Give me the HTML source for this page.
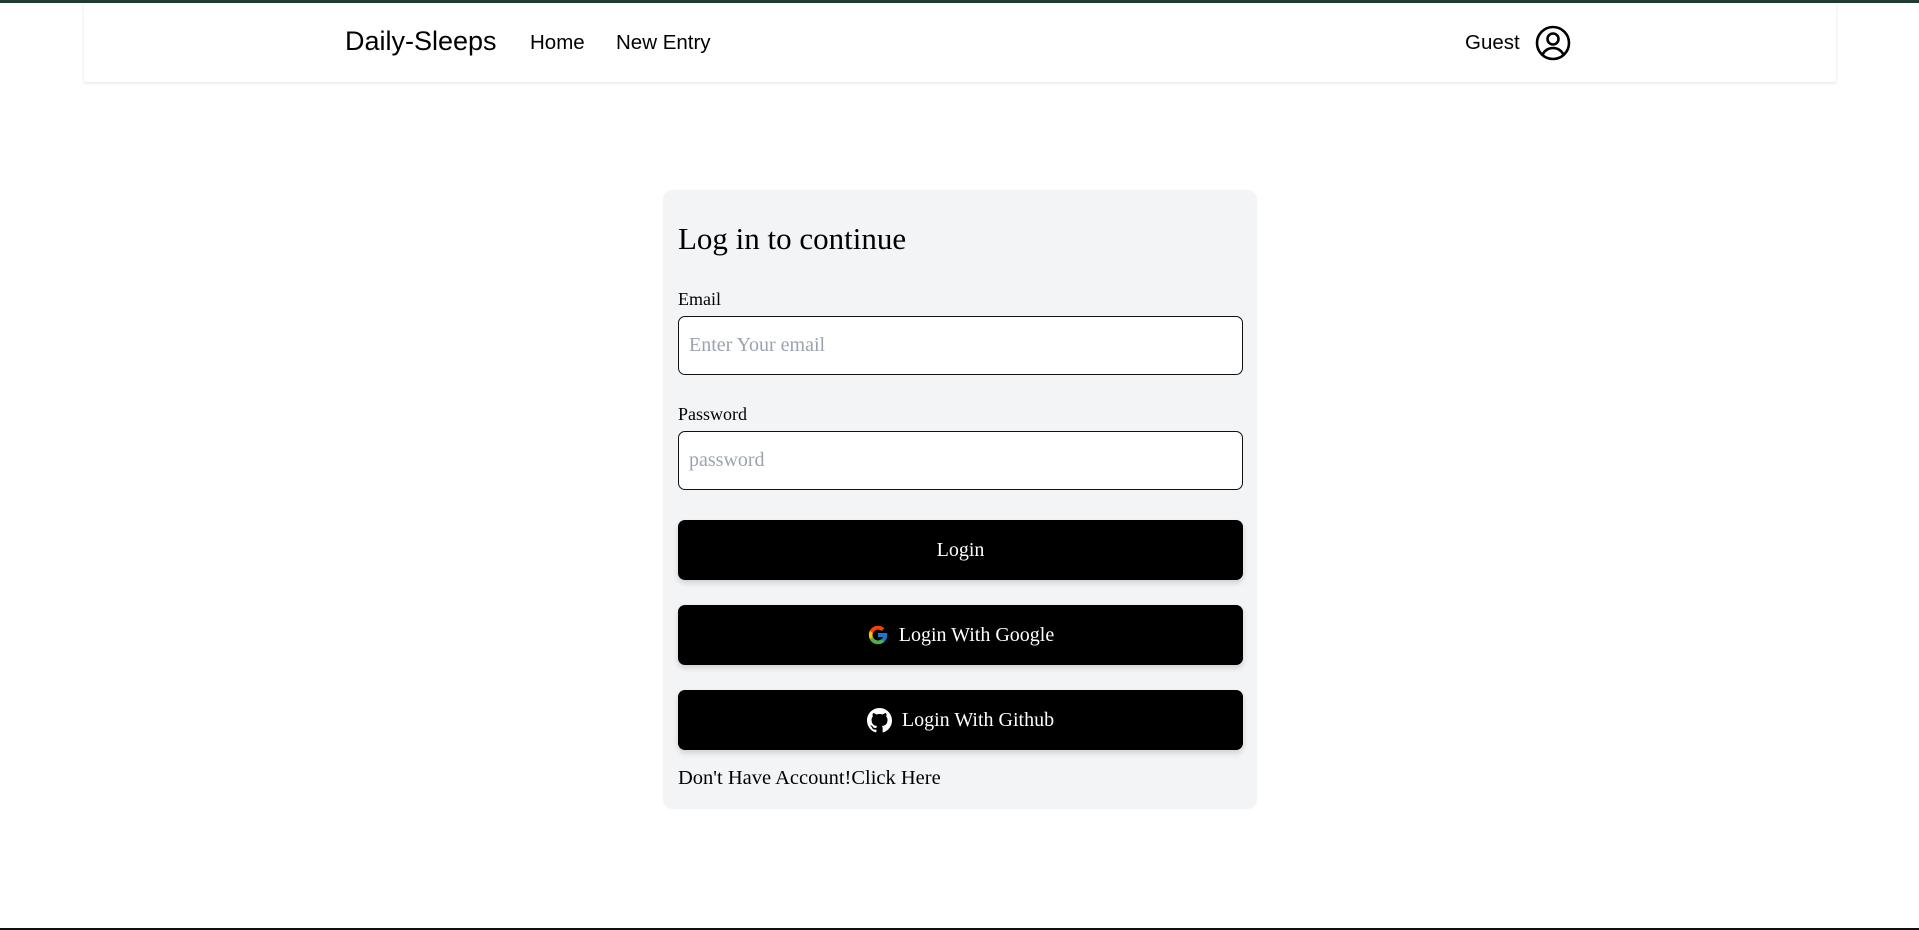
<!DOCTYPE html>
<html><head><meta charset="utf-8"><style>
*{box-sizing:border-box;margin:0;padding:0}
html,body{width:1919px;height:930px;overflow:hidden;background:#fff}
body{position:relative;font-family:"Liberation Serif",serif;color:#000}
.topbar{position:absolute;left:0;top:0;width:1919px;height:3px;background:#1f3a33}
.header{position:absolute;left:84px;top:3px;width:1752px;height:79px;background:#fff;box-shadow:0 1px 3px rgba(0,0,0,.12)}
.sans{font-family:"Liberation Sans",sans-serif;position:absolute}
.brand{left:261px;top:23px;font-size:27px}
.nav1{left:446px;top:28px;font-size:20.5px}
.nav2{left:532px;top:28px;font-size:20.5px}
.guest{left:1381px;top:28px;font-size:20.5px}
.icon{position:absolute;left:1451px;top:22px}
.card{position:absolute;left:663px;top:190px;width:594px;height:619px;background:#f3f4f6;border-radius:9px}
h1{position:absolute;left:15px;top:31px;font-size:31px;font-weight:normal}
.lbl{position:absolute;left:15px;font-size:18px}
.inp{position:absolute;left:15px;width:565px;height:59px;background:#fff;border:1.5px solid #111;border-radius:7px;font-size:20px;color:#9ca3af;padding:0 0 0 10px;line-height:56px}
.btn{position:absolute;left:15px;width:565px;height:60px;background:#000;border-radius:7px;color:#fff;font-size:20px;display:flex;align-items:center;justify-content:center;box-shadow:0 3px 6px rgba(0,0,0,.15)}
.btn svg{margin-right:10px}
.foot{position:absolute;left:15px;top:577px;font-size:20.5px}
.bottom{position:absolute;left:0;top:928px;width:1919px;height:2px;background:#111}
</style></head><body>
<div class="topbar"></div>
<div class="header">
<div class="sans brand">Daily-Sleeps</div>
<div class="sans nav1">Home</div>
<div class="sans nav2">New Entry</div>
<div class="sans guest">Guest</div>
<svg class="icon" width="36" height="36" viewBox="0 0 36 36" fill="none" stroke="#000" stroke-width="2.6"><circle cx="18" cy="18" r="16"/><circle cx="18" cy="14" r="5.5"/><path d="M7.5 29.5c2.5-4.5 6-6.5 10.5-6.5s8 2 10.5 6.5"/></svg>
</div>
<div class="card">
<h1>Log in to continue</h1>
<div class="lbl" style="top:99px">Email</div>
<div class="inp" style="top:126px">Enter Your email</div>
<div class="lbl" style="top:214px">Password</div>
<div class="inp" style="top:241px">password</div>
<div class="btn" style="top:330px">Login</div>
<div class="btn" style="top:415px"><svg width="22" height="22" viewBox="0 0 48 48"><path fill="#FFC107" d="M43.6 20.1H42V20H24v8h11.3C33.7 32.7 29.2 36 24 36c-6.6 0-12-5.4-12-12s5.4-12 12-12c3.1 0 5.8 1.2 7.9 3.1l5.7-5.7C34 6.1 29.3 4 24 4 12.9 4 4 12.9 4 24s8.9 20 20 20 20-8.9 20-20c0-1.300-.1-2.6-.4-3.9z"/><path fill="#FF3D00" d="M6.3 14.7l6.6 4.8C14.7 15.1 19 12 24 12c3.1 0 5.8 1.2 7.9 3.1l5.7-5.7C34 6.1 29.3 4 24 4 16.3 4 9.7 8.3 6.3 14.7z"/><path fill="#4CAF50" d="M24 44c5.2 0 9.9-2 13.4-5.2l-6.2-5.2C29.2 35.1 26.7 36 24 36c-5.2 0-9.6-3.3-11.3-8l-6.5 5C9.5 39.6 16.2 44 24 44z"/><path fill="#1976D2" d="M43.6 20.1H42V20H24v8h11.3c-.8 2.2-2.2 4.2-4.1 5.6l6.2 5.2C37 39.2 44 34 44 24c0-1.3-.1-2.6-.4-3.9z"/></svg>Login With Google</div>
<div class="btn" style="top:500px"><svg width="25" height="25" viewBox="0 0 16 16" fill="#fff"><path d="M8 0C3.58 0 0 3.58 0 8c0 3.54 2.290 6.53 5.47 7.59.4.07.55-.17.55-.38 0-.19-.01-.82-.01-1.49-2.01.37-2.53-.49-2.690-.94-.09-.23-.48-.94-.82-1.13-.28-.15-.68-.52-.01-.53.63-.01 1.080.58 1.230.82.72 1.210 1.870.87 2.330.66.07-.52.28-.87.51-1.07-1.78-.2-3.64-.89-3.64-3.950 0-.87.31-1.590.82-2.150-.08-.2-.36-1.020.08-2.120 0 0 .67-.21 2.200.82.64-.18 1.320-.27 2-.27.68 0 1.360.09 2 .27 1.530-1.040 2.200-.82 2.200-.82.44 1.100.16 1.920.08 2.120.51.56.82 1.270.82 2.150 0 3.070-1.870 3.750-3.650 3.950.29.25.54.73.54 1.480 0 1.070-.01 1.930-.01 2.200 0 .21.15.46.55.38A8.013 8.013 0 0016 8c0-4.42-3.58-8-8-8z"/></svg>Login With Github</div>
<div class="foot">Don't Have Account!Click Here</div>
</div>
<div class="bottom"></div>
</body></html>
